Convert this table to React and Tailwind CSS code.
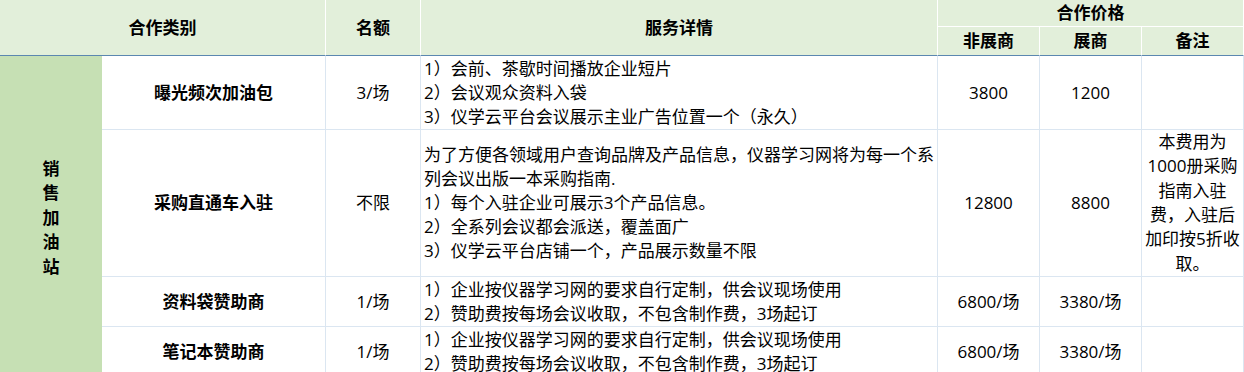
const head =
  "bg-[#e2efda] border-r border-b border-white flex items-center justify-center font-bold";
const headLast = "border-b-[#5b87b0]";
const cell =
  "bg-white border-r border-b border-[#dbe6f1] flex items-center justify-center";
const detail =
  "bg-white border-r border-b border-[#dbe6f1] flex flex-col justify-center pl-[3px] whitespace-nowrap leading-[24px]";

const rows = [
  {
    name: "曝光频次加油包",
    quota: "3/场",
    lines: [
      "1）会前、茶歇时间播放企业短片",
      "2）会议观众资料入袋",
      "3）仪学云平台会议展示主业广告位置一个（永久）",
    ],
    price: "3800",
    exhibitor: "1200",
    note: [],
  },
  {
    name: "采购直通车入驻",
    quota: "不限",
    lines: [
      "为了方便各领域用户查询品牌及产品信息，仪器学习网将为每一个系",
      "列会议出版一本采购指南.",
      "1）每个入驻企业可展示3个产品信息。",
      "2）全系列会议都会派送，覆盖面广",
      "3）仪学云平台店铺一个，产品展示数量不限",
    ],
    price: "12800",
    exhibitor: "8800",
    note: ["本费用为", "1000册采购", "指南入驻", "费，入驻后", "加印按5折收", "取。"],
  },
  {
    name: "资料袋赞助商",
    quota: "1/场",
    lines: [
      "1）企业按仪器学习网的要求自行定制，供会议现场使用",
      "2）赞助费按每场会议收取，不包含制作费，3场起订",
    ],
    price: "6800/场",
    exhibitor: "3380/场",
    note: [],
  },
  {
    name: "笔记本赞助商",
    quota: "1/场",
    lines: [
      "1）企业按仪器学习网的要求自行定制，供会议现场使用",
      "2）赞助费按每场会议收取，不包含制作费，3场起订",
    ],
    price: "6800/场",
    exhibitor: "3380/场",
    note: [],
  },
];

export default function App() {
  return (
    <div
      className="w-[1244px] h-[372px] overflow-hidden bg-white text-black text-[17px]"
      style={{ fontFamily: '"Open Sans", "Noto Sans CJK SC", sans-serif' }}
    >
      <div className="grid grid-cols-[102px_224px_95px_517px_102px_102px_102px] grid-rows-[27px_29px_74px_147px_50px_50px]">
        <div className={`${head} ${headLast} col-span-2 row-span-2`}>合作类别</div>
        <div className={`${head} ${headLast} row-span-2`}>名额</div>
        <div className={`${head} ${headLast} row-span-2`}>服务详情</div>
        <div className={`${head} col-span-3`}>合作价格</div>
        <div className={`${head} ${headLast}`}>非展商</div>
        <div className={`${head} ${headLast}`}>展商</div>
        <div className={`${head} ${headLast}`}>备注</div>

        <div className="bg-[#c6e0b4] row-span-4 flex flex-col items-center justify-center font-bold leading-[24.5px] pt-[3px]">
          {"销售加油站".split("").map((c) => (
            <span key={c}>{c}</span>
          ))}
        </div>

        {rows.map((r) => (
          <>
            <div key={r.name + "n"} className={`${cell} font-bold`}>
              {r.name}
            </div>
            <div key={r.name + "q"} className={cell}>
              {r.quota}
            </div>
            <div key={r.name + "d"} className={detail}>
              {r.lines.map((l) => (
                <span key={l}>{l}</span>
              ))}
            </div>
            <div key={r.name + "p"} className={cell}>
              {r.price}
            </div>
            <div key={r.name + "e"} className={cell}>
              {r.exhibitor}
            </div>
            <div
              key={r.name + "r"}
              className={`${cell} flex-col leading-[24.4px] text-center`}
            >
              {r.note.map((l) => (
                <span key={l}>{l}</span>
              ))}
            </div>
          </>
        ))}
      </div>
    </div>
  );
}
